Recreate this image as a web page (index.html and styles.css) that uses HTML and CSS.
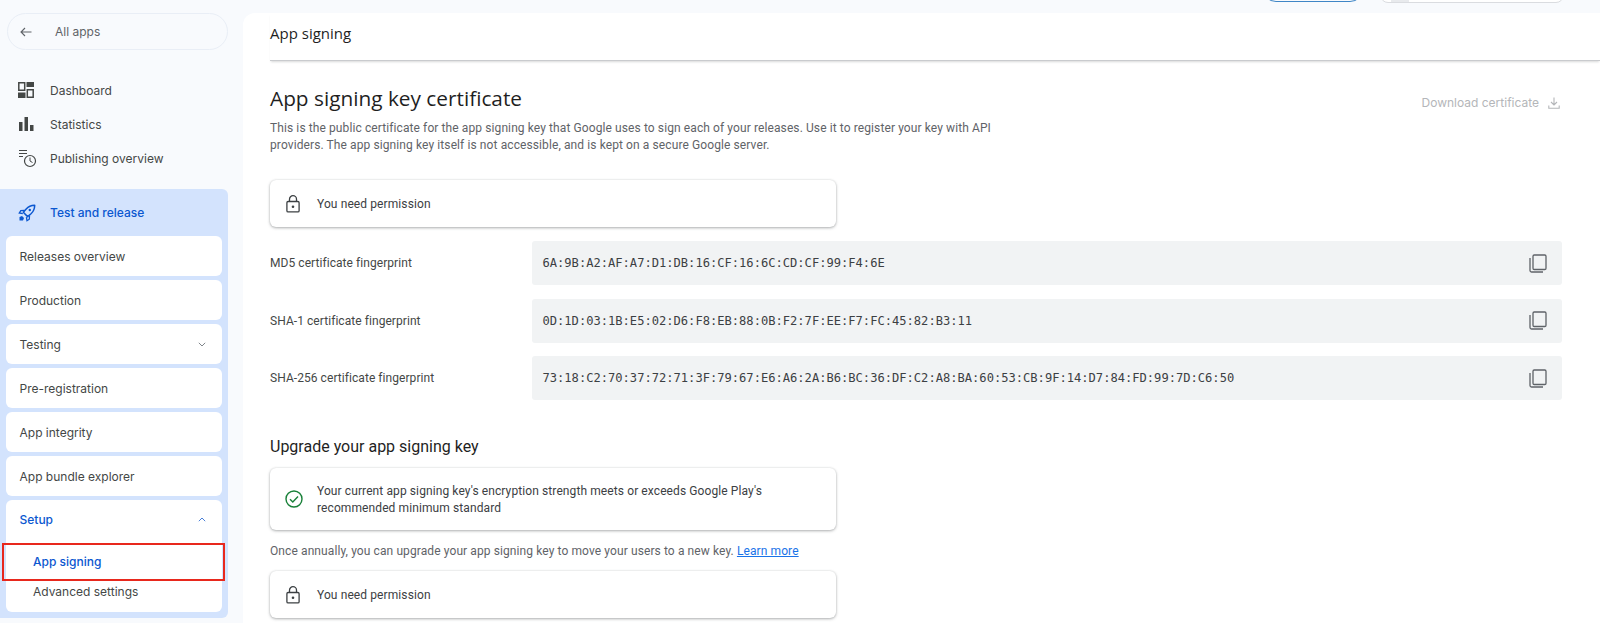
FILE: index.html
```html
<!DOCTYPE html>
<html lang="en">
<head>
<meta charset="utf-8">
<title>App signing</title>
<link rel="stylesheet" href="styles.css">
</head>
<body>
<div class="app">
  <aside class="sidebar">
    <a class="all-apps">
      <svg class="back" viewBox="0 0 12 10"><path d="M11.500 5H1M5 1L1 5l4 4" fill="none" stroke="#5f6368" stroke-width="1.100"/></svg>
      <span>All apps</span>
    </a>
    <nav class="top-nav">
      <div class="nav-row">
        <svg class="nav-icon" viewBox="0 0 16 16"><path d="M.8.8h5.900v7.400H.8zM9.300 7.800h5.900v7.400H9.300z" fill="none" stroke="#444746" stroke-width="1.500"/><path d="M8.500 0H16v5H8.500zM0 10.500h7.500V16H0z" fill="#444746"/></svg>
        <span>Dashboard</span>
      </div>
      <div class="nav-row">
        <svg class="nav-icon" viewBox="0 0 16 16"><path d="M1 6h3.500v9H1zM6.500 1H10v14H6.500zM12 9h3.500v6H12z" fill="#444746"/></svg>
        <span>Statistics</span>
      </div>
      <div class="nav-row">
        <svg class="nav-icon wide" viewBox="0 0 19 19"><path d="M1 1.500h8M1 4.500h8M1 7.500h4" stroke="#444746" stroke-width="1.100" fill="none"/><circle cx="12" cy="12" r="5.500" fill="none" stroke="#444746" stroke-width="1.200"/><path d="M12 8.500V12l2.500 1.500" fill="none" stroke="#444746"/></svg>
        <span>Publishing overview</span>
      </div>
    </nav>
    <section class="group">
      <div class="group-head">
        <svg class="rocket" viewBox="0 0 18 18"><path d="M16.500 1.200c-3.500.1-6.200 1.400-8.300 3.700L5.300 8.300l4.300 4.300 3.400-2.900c2.300-2.100 3.600-4.800 3.700-8.300z" fill="none" stroke="#0b57d0" stroke-width="1.500" stroke-linejoin="round"/><path d="M6.500 6.500l-3.700.2L1.300 9l3.500.6M11.500 11.500l-.2 3.700-2.300 1.500-.6-3.500" fill="none" stroke="#0b57d0" stroke-width="1.300"/><circle cx="11.800" cy="6" r="1.200" fill="#0b57d0"/><path d="M4 12l-2.500 1v3.500H5l1-2.500z" fill="#0b57d0"/></svg>
        <span>Test and release</span>
      </div>
      <div class="item">Releases overview</div>
      <div class="item">Production</div>
      <div class="item">Testing<svg class="chev" viewBox="0 0 8 5"><path d="M.8.8L4 4l3.200-3.200" fill="none" stroke="#80868b" stroke-width="1"/></svg></div>
      <div class="item">Pre-registration</div>
      <div class="item">App integrity</div>
      <div class="item">App bundle explorer</div>
      <div class="item-open">
        <div class="item-head">Setup<svg class="chev" viewBox="0 0 8 5"><path d="M.8 4.200L4 1l3.200 3.200" fill="none" stroke="#4a80d8" stroke-width="1"/></svg></div>
        <div class="sub current">App signing</div>
        <div class="sub">Advanced settings</div>
      </div>
    </section>
  </aside>

  <div class="content">
    <div class="topbar">
      <div class="btn-outline"></div>
      <div class="search-box"></div>
    </div>
    <main class="panel">
      <header class="page-head">App signing</header>
      <div class="title-row">
        <h1>App signing key certificate</h1>
        <div class="download">Download certificate
          <svg class="dl-icon" viewBox="0 0 12 12"><path d="M6 .5v7M3 5l3 3 3-3M.8 8.500v2.700h10.400V8.500" fill="none" stroke="#b4b6b9" stroke-width="1.100"/></svg>
        </div>
      </div>
      <p class="desc">This is the public certificate for the app signing key that Google uses to sign each of your releases. Use it to register your key with API providers. The app signing key itself is not accessible, and is kept on a secure Google server.</p>

      <div class="card perm first">
        <svg class="lock" viewBox="0 0 14 18"><path d="M3.500 6.500V4.200a3.500 3.500 0 0 1 7 0v2.300" fill="none" stroke="#3c4043" stroke-width="1.300"/><rect x=".9" y="6.500" width="12.200" height="10.400" rx="1.200" fill="none" stroke="#3c4043" stroke-width="1.300"/><circle cx="7" cy="11.700" r="1.300" fill="#3c4043"/></svg>
        <span>You need permission</span>
      </div>

      <div class="fingerprints">
        <div class="fp">
          <div class="fp-label">MD5 certificate fingerprint</div>
          <div class="fp-value"><code>6A:9B:A2:AF:A7:D1:DB:16:CF:16:6C:CD:CF:99:F4:6E</code>
            <svg class="copy" viewBox="0 0 18 19"><path d="M1 4v12.500a1.500 1.500 0 0 0 1.500 1.500H14" fill="none" stroke="#5f6368" stroke-width="1.300"/><rect x="4" y="1" width="13" height="14.500" rx="1.200" fill="none" stroke="#5f6368" stroke-width="1.300"/></svg>
          </div>
        </div>
        <div class="fp">
          <div class="fp-label">SHA-1 certificate fingerprint</div>
          <div class="fp-value"><code>0D:1D:03:1B:E5:02:D6:F8:EB:88:0B:F2:7F:EE:F7:FC:45:82:B3:11</code>
            <svg class="copy" viewBox="0 0 18 19"><path d="M1 4v12.500a1.500 1.500 0 0 0 1.500 1.500H14" fill="none" stroke="#5f6368" stroke-width="1.300"/><rect x="4" y="1" width="13" height="14.500" rx="1.200" fill="none" stroke="#5f6368" stroke-width="1.300"/></svg>
          </div>
        </div>
        <div class="fp">
          <div class="fp-label">SHA-256 certificate fingerprint</div>
          <div class="fp-value"><code>73:18:C2:70:37:72:71:3F:79:67:E6:A6:2A:B6:BC:36:DF:C2:A8:BA:60:53:CB:9F:14:D7:84:FD:99:7D:C6:50</code>
            <svg class="copy" viewBox="0 0 18 19"><path d="M1 4v12.500a1.500 1.500 0 0 0 1.500 1.500H14" fill="none" stroke="#5f6368" stroke-width="1.300"/><rect x="4" y="1" width="13" height="14.500" rx="1.200" fill="none" stroke="#5f6368" stroke-width="1.300"/></svg>
          </div>
        </div>
      </div>

      <h2>Upgrade your app signing key</h2>
      <div class="card ok">
        <svg class="check" viewBox="0 0 18 18"><circle cx="9" cy="9" r="8" fill="none" stroke="#188038" stroke-width="1.400"/><path d="M5 9.300l2.800 2.800L13 6.500" fill="none" stroke="#188038" stroke-width="1.400"/></svg>
        <span class="ok-text">Your current app signing key's encryption strength meets or exceeds Google Play's recommended minimum standard</span>
      </div>
      <p class="note">Once annually, you can upgrade your app signing key to move your users to a new key. <a class="learn">Learn more</a></p>
      <div class="card perm">
        <svg class="lock" viewBox="0 0 14 18"><path d="M3.500 6.500V4.200a3.500 3.500 0 0 1 7 0v2.300" fill="none" stroke="#3c4043" stroke-width="1.300"/><rect x=".9" y="6.500" width="12.200" height="10.400" rx="1.200" fill="none" stroke="#3c4043" stroke-width="1.300"/><circle cx="7" cy="11.700" r="1.300" fill="#3c4043"/></svg>
        <span>You need permission</span>
      </div>
    </main>
  </div>
</div>
</body>
</html>
```
FILE: styles.css
```css
* { box-sizing: border-box; }
html, body { margin: 0; height: 623px; overflow: hidden; background: #f8fafd; }
body { font-family: Roboto, "Liberation Sans", sans-serif; color: #202124; }
.app { display: flex; height: 623px; }

.sidebar { width: 243px; flex: none; padding-top: 13px; font-family: Inter, Roboto, sans-serif; font-size: 12px; color: #444746; }
.all-apps { display: flex; align-items: center; width: 221px; height: 37px; margin-left: 7px; padding-left: 12px; border: 1.5px solid #e9eef6; border-radius: 19px; color: #5f6368; }
.back { width: 12px; height: 10px; margin-right: 23px; }
.top-nav { display: flex; flex-direction: column; padding-top: 23px; }
.nav-row { display: flex; align-items: center; height: 34px; padding-left: 18px; }
.nav-icon { width: 16px; height: 16px; margin-right: 16px; }
.nav-icon.wide { width: 19px; height: 19px; margin-right: 13px; }
.group { width: 228px; height: 429px; margin-top: 14px; padding: 0 6px; background: #d3e3fd; border-radius: 0 6px 6px 0; }
.group-head { display: flex; align-items: center; height: 47px; padding-left: 12px; color: #0b57d0; font-weight: 500; }
.rocket { width: 18px; height: 18px; margin-right: 14px; }
.item { display: flex; align-items: center; justify-content: space-between; height: 40px; margin-bottom: 4px; padding: 0 16px 0 13.500px; background: #fff; border-radius: 6px; }
.chev { width: 8px; height: 5px; }
.item-open { height: 112px; background: #fff; border-radius: 6px; }
.item-head { display: flex; align-items: center; justify-content: space-between; height: 40px; padding: 0 16px 1px 13.500px; color: #0b57d0; font-weight: 500; }
.sub { display: flex; align-items: center; height: 21px; padding-left: 27px; }
.sub.current { height: 38px; margin: 3px -3px 0 -4px; padding: 0 0 2px 29px; border: 2px solid #e8281d; color: #0b57d0; font-weight: 500; }

.content { flex: 1; min-width: 0; display: flex; flex-direction: column; }
.topbar { height: 13px; flex: none; display: flex; justify-content: flex-end; align-items: flex-end; gap: 16px; padding-right: 36px; overflow: hidden; }
.btn-outline { width: 102px; height: 30px; margin-bottom: 11px; border: 1px solid #3f86c6; border-radius: 14px; }
.search-box { width: 184px; height: 30px; margin-bottom: 10px; background: #fff; border: 1px solid #dadce0; border-radius: 8px; display: flex; align-items: flex-end; padding-left: 10px; }
.search-box::before { content: ""; width: 18px; height: 2px; background: #e8eaed; }

.panel { flex: 1; background: #fff; border-radius: 12px 0 0 0; padding: 0 38px 0 27px; }
.page-head { height: 48px; margin-right: -38px; display: flex; align-items: center; padding-bottom: 7px; font-family: "Open Sans", Roboto, sans-serif; font-size: 15px; color: #1f1f1f; border-bottom: 1px solid #c9cbce; box-shadow: 0 2px 2px -1px rgba(60, 64, 67, .2); }
.title-row { display: flex; justify-content: space-between; align-items: center; height: 30px; margin-top: 22px; }
h1 { margin: 0; font-family: "Open Sans", Roboto, sans-serif; font-size: 20.800px; font-weight: 500; color: #1f1f1f; }
.download { display: flex; align-items: center; margin-top: 9px; font-family: Inter, Roboto, sans-serif; font-size: 12px; color: #b4b6b9; }
.dl-icon { width: 12px; height: 12px; margin: 0 2px 0 9px; }
.desc { width: 730px; margin: 7px 0 0; font-size: 12px; line-height: 17px; letter-spacing: .1px; color: #5f6368; }
.card { display: flex; align-items: center; width: 566px; background: #fff; border-radius: 6px; box-shadow: 0 1px 3px rgba(60, 64, 67, .4), 0 0 2px rgba(60, 64, 67, .12); font-size: 12px; letter-spacing: .1px; color: #3c4043; }
.perm { height: 47px; padding-left: 16px; gap: 17px; }
.first { margin-top: 26px; }
.lock { width: 14px; height: 18px; }
.fingerprints { display: flex; flex-direction: column; gap: 13.500px; margin-top: 14px; }
.fp { display: flex; align-items: center; }
.fp-label { width: 262px; flex: none; font-size: 12px; letter-spacing: .06px; color: #444746; }
.fp-value { flex: 1; display: flex; align-items: center; justify-content: space-between; height: 44px; padding: 0 15px 0 10.500px; background: #f1f3f4; border-radius: 3px; }
code { font-family: "DejaVu Sans Mono", monospace; font-size: 12.100px; color: #3c4043; }
.copy { width: 18px; height: 19px; }
h2 { margin: 37px 0 0; height: 20px; font-family: Roboto, sans-serif; font-size: 16px; line-height: 20px; font-weight: 400; color: #1f1f1f; }
.ok { height: 62px; margin-top: 11px; padding: 0 40px 0 15px; gap: 14px; line-height: 17px; }
.ok-text { padding-top: 2px; }
.check { width: 18px; height: 18px; flex: none; }
.note { margin: 13px 0 0; font-size: 12px; line-height: 16px; letter-spacing: .1px; color: #5f6368; }
.learn { color: #1a73e8; text-decoration: underline; }
.note + .card { margin-top: 12px; }
```
